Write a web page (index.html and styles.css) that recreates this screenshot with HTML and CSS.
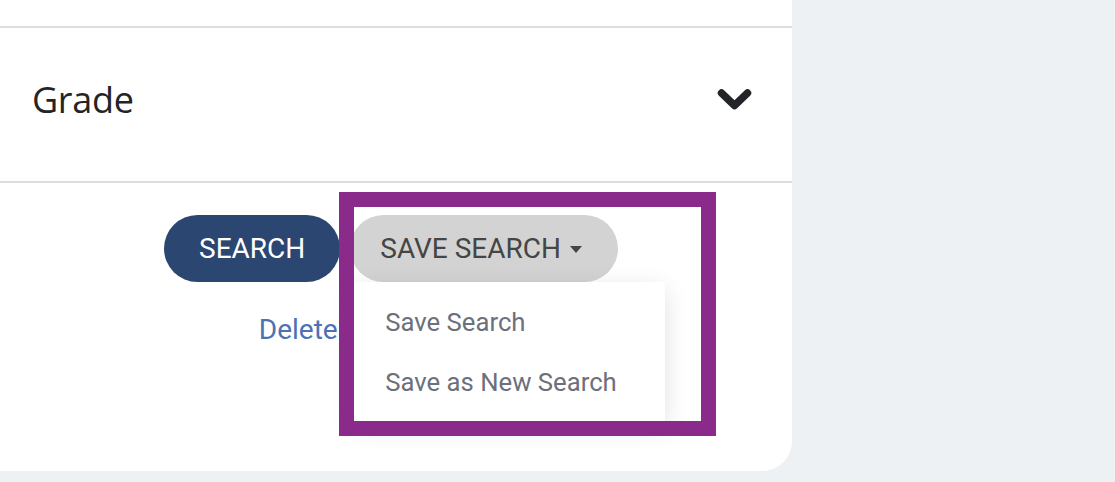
FILE: index.html
```html
<!DOCTYPE html>
<html lang="en">
<head>
<meta charset="utf-8">
<title>Search filters</title>
<link rel="stylesheet" href="styles.css">
</head>
<body>
<div class="card">
  <div class="top-space"></div>
  <div class="filter-row">
    <span class="filter-label">Grade</span>
    <svg class="chevron" width="35" height="22" viewBox="0 0 35 22" aria-hidden="true">
      <polyline points="4.5,5 17.5,17.5 30.5,5" fill="none" stroke="#222428" stroke-width="7.5" stroke-linecap="round" stroke-linejoin="round"/>
    </svg>
  </div>
  <div class="actions">
    <div class="buttons">
      <button class="btn btn-primary">SEARCH</button>
      <div class="dropdown">
        <button class="btn btn-secondary">SAVE SEARCH<span class="caret"></span></button>
        <ul class="menu">
          <li>Save Search</li>
          <li>Save as New Search</li>
        </ul>
      </div>
    </div>
    <a class="delete-link" href="#">Delete Saved Search</a>
  </div>
  <div class="highlight"></div>
</div>
</body>
</html>
```
FILE: styles.css
```css
html, body {
  margin: 0;
  padding: 0;
}
body {
  background: #eef1f4;
  width: 1115px;
  height: 482px;
  overflow: hidden;
}
.card {
  position: relative;
  width: 792px;
  height: 471px;
  background: #ffffff;
  border-bottom-right-radius: 30px;
}
.top-space {
  height: 26px;
  border-bottom: 2px solid #dddddd;
}
.filter-row {
  height: 153px;
  display: flex;
  align-items: center;
  justify-content: space-between;
  padding: 0 40px 0 32px;
  border-bottom: 2px solid #dddddd;
}
.filter-label {
  font-family: "Open Sans", "Liberation Sans", sans-serif;
  font-size: 36px;
  color: #222428;
  letter-spacing: -0.3px;
  margin-top: -10px;
}
.chevron {
  display: block;
  margin-top: -12px;
}
.actions {
  display: flex;
  flex-direction: column;
  align-items: center;
  padding-top: 32px;
  padding-right: 10px;
  font-family: Roboto, "Liberation Sans", sans-serif;
}
.buttons {
  display: flex;
  gap: 10px;
}
.btn {
  height: 67px;
  border: none;
  border-radius: 34px;
  font-family: Roboto, "Liberation Sans", sans-serif;
  font-size: 28px;
  display: flex;
  align-items: center;
  cursor: pointer;
}
.btn-primary {
  background: #2c4672;
  color: #ffffff;
  padding: 0 35px;
}
.btn-secondary {
  background: #d3d3d3;
  color: #454545;
  padding: 0 36px 0 30px;
}
.caret {
  display: inline-block;
  width: 0;
  height: 0;
  margin-left: 9px;
  margin-top: 2px;
  border-left: 6.5px solid transparent;
  border-right: 6.5px solid transparent;
  border-top: 7px solid #454545;
}
.dropdown {
  position: relative;
}
.menu {
  position: absolute;
  top: 67px;
  left: 4px;
  width: 311px;
  margin: 0;
  padding: 10px 0;
  list-style: none;
  background: #ffffff;
  border-radius: 4px;
  box-shadow: 0 6px 24px rgba(0, 0, 0, 0.12);
  z-index: 2;
}
.menu li {
  height: 60px;
  line-height: 60px;
  padding-left: 31px;
  font-size: 25.7px;
  color: #6c707c;
}
.delete-link {
  margin-top: 31px;
  margin-right: 10px;
  font-size: 28px;
  color: #4a72b5;
  text-decoration: none;
}
.highlight {
  position: absolute;
  left: 339px;
  top: 192px;
  width: 347px;
  height: 214px;
  border: 15px solid #8a2b8b;
  z-index: 3;
}
```
